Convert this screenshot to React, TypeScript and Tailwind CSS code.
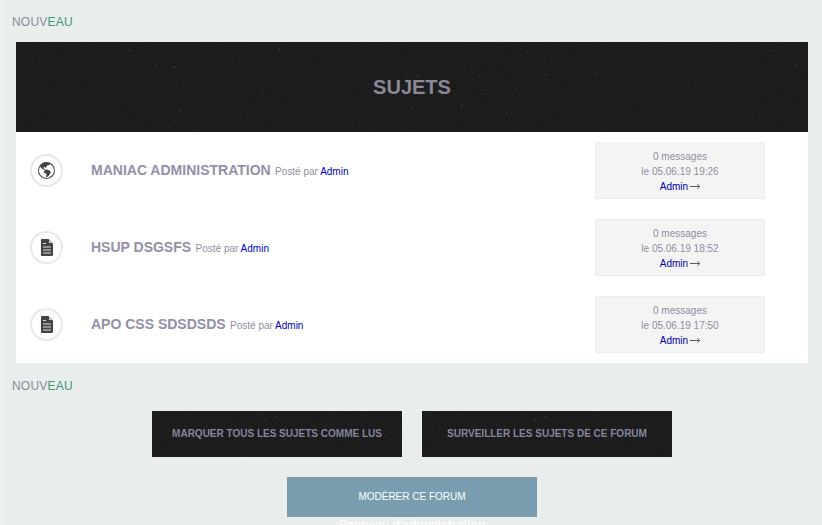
import React from 'react';
import { BsGlobeAmericas } from 'react-icons/bs';

// Grain du fond noir (bandeau et boutons)
const Grain: React.FC<{ id: string }> = ({ id }) => (
  <svg className="absolute inset-0 w-full h-full" aria-hidden="true">
    <filter id={`${id}-taches`} x="0" y="0" width="100%" height="100%">
      <feTurbulence type="fractalNoise" baseFrequency="0.5" numOctaves="3" seed="3" />
      <feColorMatrix values="0 0 0 0 1  0 0 0 0 1  0 0 0 0 1  1.4 0 0 0 -0.62" />
    </filter>
    <filter id={`${id}-points`} x="0" y="0" width="100%" height="100%">
      <feTurbulence type="fractalNoise" baseFrequency="0.4" numOctaves="2" seed="11" />
      <feColorMatrix values="0 0 0 0 1  0 0 0 0 1  0 0 0 0 1  14 0 0 0 -11.6" />
    </filter>
    <rect width="100%" height="100%" fill="#1b1b1b" />
    <rect width="100%" height="100%" filter={`url(#${id}-taches)`} opacity="0.07" />
    <rect width="100%" height="100%" filter={`url(#${id}-points)`} opacity="0.28" />
  </svg>
);

const Document = () => (
  <svg viewBox="0 0 12 17" className="w-3 h-[17px]" aria-hidden="true">
    <path fill="#444" d="M0 1a1 1 0 0 1 1-1h6.5L12 4.5V16a1 1 0 0 1-1 1H1a1 1 0 0 1-1-1z" />
    <path fill="#ddd" d="M8 1l3 3H8z" />
    <path fill="#ddd" d="M2 4h3v1H2zM2 7.5h8v1H2zM2 10.5h8v1H2zM2 13.5h8v1H2z" />
  </svg>
);

const Fleche = () => (
  <svg viewBox="0 0 10 7" className="inline-block w-2.5 h-[7px] ml-0.5" aria-hidden="true">
    <path fill="none" stroke="#333" strokeWidth="0.8" d="M0 3.5h9.6M7.4 1.2l2.3 2.3-2.3 2.3" />
  </svg>
);

const Nouveau = ({ className }: { className: string }) => (
  <div className={`pl-[5px] text-xs leading-[14px] tracking-[0.2px] text-[#8b8a9e] ${className}`}>
    NOUV<span className="text-[#3f9877]">EAU</span>
  </div>
);

const sujets = [
  { titre: 'MANIAC ADMINISTRATION', date: 'le 05.06.19 19:26', globe: true },
  { titre: 'HSUP DSGSFS', date: 'le 05.06.19 18:52', globe: false },
  { titre: 'APO CSS SDSDSDS', date: 'le 05.06.19 17:50', globe: false },
];

const Ligne: React.FC<{ titre: string; date: string; globe: boolean }> = ({ titre, date, globe }) => (
  <div className="flex items-center h-[57px] pl-3.5">
    <div className="w-[33px] h-[33px] rounded-full border-2 border-[#e8e8e8] flex items-center justify-center text-[#444] text-[17px] shrink-0">
      {globe ? <BsGlobeAmericas /> : <Document />}
    </div>
    <div className="ml-7 w-[504px] leading-none -mt-0.5">
      <span className="text-sm font-bold text-[#9390a8]">{titre}</span>{' '}
      <span className="text-[10px] text-[#8f8f9f]">
        Posté par <a className="text-[#0000cc]">Admin</a>
      </span>
    </div>
    <div className="w-[170px] h-[57px] bg-[#f4f4f4] border border-[#ededed] flex flex-col items-center pt-1.5 text-[10px] leading-[15px] text-[#8f8f9f]">
      <span>0 messages</span>
      <span>{date}</span>
      <span className="text-[#0000aa] flex items-center">
        Admin
        <Fleche />
      </span>
    </div>
  </div>
);

const BoutonNoir: React.FC<{ id: string; texte: string }> = ({ id, texte }) => (
  <button className="relative w-[250px] h-[46px] overflow-hidden flex items-center justify-center pb-0.5">
    <Grain id={id} />
    <span className="relative text-[10px] font-bold text-[#85849c]">{texte}</span>
  </button>
);

export default function App() {
  return (
    <div className="flex h-[525px] overflow-hidden bg-[#e9eeed] font-['Liberation_Sans',Arial,sans-serif]">
      {/* Bande claire du bord gauche */}
      <div className="w-[7px] shrink-0 bg-[#ecefef]" />

      <div className="w-[815px]">
        <Nouveau className="pt-[15px]" />

        <div className="mt-[13px] ml-[9px] w-[792px] bg-white">
          <div className="relative h-[90px] flex items-center justify-center overflow-hidden">
            <Grain id="grain-titre" />
            <h1 className="relative text-xl font-bold text-[#8a8799]">SUJETS</h1>
          </div>
          <div className="flex flex-col gap-5 pt-2.5 pb-2.5">
            {sujets.map((s) => (
              <Ligne key={s.titre} {...s} />
            ))}
          </div>
        </div>

        <Nouveau className="pt-4" />

        <div className="flex gap-5 mt-[18px] ml-[145px]">
          <BoutonNoir id="grain-a" texte="MARQUER TOUS LES SUJETS COMME LUS" />
          <BoutonNoir id="grain-b" texte="SURVEILLER LES SUJETS DE CE FORUM" />
        </div>

        <div className="flex mt-5 ml-[280px]">
          <button className="w-[250px] h-10 bg-[#799daf] text-[10px] text-white pb-0.5">MODÉRER CE FORUM</button>
        </div>

        <div className="w-[250px] ml-[280px] text-center text-[13px] leading-4 text-white font-['Roboto',sans-serif]">Panneau d'administration</div>
      </div>
    </div>
  );
}
